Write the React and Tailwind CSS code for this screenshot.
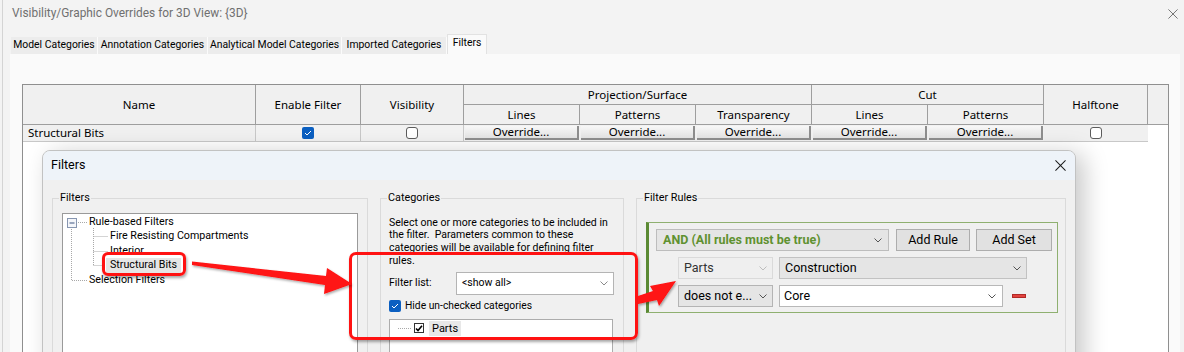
import React from "react";

function Chevron({ color = "#555" }) {
  return (
    <svg width="8" height="5" viewBox="0 0 8 5" className="shrink-0">
      <path d="M0.5 0.5 L4 4 L7.5 0.5" fill="none" stroke={color} strokeWidth="1" />
    </svg>
  );
}

function CloseX({ size = 12, color = "#333" }) {
  return (
    <svg width={size} height={size} viewBox="0 0 12 12" className="shrink-0">
      <path d="M0.5 0.5 L11.5 11.5 M11.5 0.5 L0.5 11.5" stroke={color} strokeWidth="1.1" />
    </svg>
  );
}

function BlueCheck() {
  return (
    <span className="flex items-center justify-center w-[12px] h-[12px] rounded-[2px] bg-[#0b5fc1]">
      <svg width="8" height="6" viewBox="0 0 8 6">
        <path d="M1 3 L3 5 L7 1" fill="none" stroke="#fff" strokeWidth="1" />
      </svg>
    </span>
  );
}

function EmptyCheck() {
  return <span className="block w-[12px] h-[12px] rounded-[3px] border border-[#5c5c5c] bg-white" />;
}

function Override() {
  return (
    <div className="p-[1px] border-b border-[#c8c8c8] bg-[#f2f2f2]">
      <div className="h-full flex items-center justify-center bg-gradient-to-b from-[#f7f7f7] to-[#e4e4e4] border-r-2 border-b-2 border-[#8e8e8e] text-[11.5px] leading-none">
        Override...
      </div>
    </div>
  );
}

function HCell({ className = "", children }) {
  return (
    <div className={`flex items-center justify-center bg-[#f0f0f0] border-r border-b border-[#9e9e9e] text-[11.5px] leading-none ${className}`}>
      {children}
    </div>
  );
}

export default function App() {
  const tabs = [
    ["Model Categories", "w-[87px]"],
    ["Annotation Categories", "w-[110px]"],
    ["Analytical Model Categories", "w-[134px]"],
    ["Imported Categories", "w-[105px]"],
  ];
  return (
    <div className="relative w-[1184px] h-[352px] overflow-hidden bg-[#f3f3f3] font-['Noto_Sans',sans-serif] text-black flex flex-col">
      {/* title bar */}
      <div className="h-[28px] shrink-0 flex items-center justify-between pl-[12px] pr-[6px] font-['Roboto',sans-serif]">
        <span className="text-[11.9px] text-[#707070]">Visibility/Graphic Overrides for 3D View: {"{3D}"}</span>
        <CloseX size={10} color="#6a6a6a" />
      </div>
      {/* tabs */}
      <div className="h-[26px] shrink-0 flex items-end pl-[11px] font-['Roboto',sans-serif]">
        {tabs.map(([t, w]) => (
          <div key={t} className={`${w} h-[17px] flex items-center justify-center bg-[#ececec] border-r border-[#fbfbfb] text-[10.4px] leading-none whitespace-nowrap`}>
            {t}
          </div>
        ))}
        <div className="w-[40px] h-[20px] flex items-center justify-center bg-[#fafafa] border-x border-t border-[#e2e2e2] text-[10.4px] leading-none pb-[2px]">
          Filters
        </div>
      </div>
      {/* tab page */}
      <div className="flex-1 min-h-0 ml-[10px] mr-[4px] bg-[#fafafa] pt-[30px] pl-[12px] pr-[11px] flex flex-col">
        <div className="flex-1 bg-white border-x border-t border-[#8f8f8f]">
          <div className="grid grid-cols-[233px_105px_103px_116px_116px_116px_116px_116px_104px_20px] grid-rows-[20px_20px_17px]">
            <HCell className="row-span-2">Name</HCell>
            <HCell className="row-span-2">Enable Filter</HCell>
            <HCell className="row-span-2">Visibility</HCell>
            <HCell className="col-span-3">Projection/Surface</HCell>
            <HCell className="col-span-2">Cut</HCell>
            <HCell className="row-span-2">Halftone</HCell>
            <HCell className="row-span-2 border-r-0" />
            <HCell>Lines</HCell>
            <HCell>Patterns</HCell>
            <HCell>Transparency</HCell>
            <HCell>Lines</HCell>
            <HCell>Patterns</HCell>
            {/* data row */}
            <div className="flex items-center pl-[5px] bg-[#f0f0f0] border-r border-b border-[#c8c8c8] text-[11.5px] leading-none">
              Structural Bits
            </div>
            <div className="flex items-center justify-center bg-[#f2f2f2] border-r border-b border-[#c8c8c8]">
              <BlueCheck />
            </div>
            <div className="flex items-center justify-center bg-[#f2f2f2] border-r border-b border-[#c8c8c8]">
              <EmptyCheck />
            </div>
            <Override />
            <Override />
            <Override />
            <Override />
            <Override />
            <div className="flex items-center justify-center bg-[#f0f0f0] border-b border-[#c8c8c8]">
              <EmptyCheck />
            </div>
            <div className="bg-white" />
          </div>
        </div>
      </div>

      {/* parent window edge */}
      <div className="absolute left-[2px] top-0 h-[352px] w-px bg-[#d4d4d4]" />

      {/* Filters dialog */}
      <div className="absolute left-[42px] top-[150px] w-[1034px] h-[230px] rounded-t-[8px] border border-[#c2c2c2] bg-[#f0f0f0] shadow-[8px_4px_24px_rgba(0,0,0,0.22)] overflow-hidden flex flex-col font-['Roboto',sans-serif]">
        <div className="h-[29px] shrink-0 bg-[#eef3f9] flex items-center justify-between pl-[8px] pr-[9px]">
          <span className="text-[12.5px]">Filters</span>
          <CloseX size={11} color="#1a1a1a" />
        </div>
        <div className="flex gap-[12px] pl-[9px] pt-[11px]">
          {/* Filters group */}
          <fieldset className="w-[316px] h-[200px] border border-[#dadada] p-0 m-0 min-w-0">
            <legend className="ml-[6px] px-[1px] text-[10.8px] leading-[14px]">Filters</legend>
            <div className="relative mt-[8px] ml-[9px] w-[296px] h-[160px] bg-white border border-[#9a9a9a] text-[10.7px] leading-none">
              <svg className="absolute left-0 top-0" width="120" height="80" viewBox="0 0 120 80">
                <g stroke="#a8a8a8" strokeWidth="1" strokeDasharray="1 1" fill="none">
                  <path d="M13 8.5 H24" />
                  <path d="M8.5 13 V66.5 H24" />
                  <path d="M30.5 14 V51.5" />
                  <path d="M30.5 22.5 H45 M30.5 37.5 H45 M30.5 51.5 H42" />
                </g>
                <rect x="4.5" y="4.5" width="9" height="9" fill="#f4f6fa" stroke="#8796b0" />
                <path d="M6.5 9 H11.5" stroke="#3d5580" strokeWidth="1" />
              </svg>
              <div className="flex flex-col pt-[1px]">
                <div className="h-[14.5px] flex items-center pl-[26px]">Rule-based Filters</div>
                <div className="h-[14.5px] flex items-center pl-[47px]">Fire Resisting Compartments</div>
                <div className="h-[14.5px] flex items-center pl-[47px]">Interior</div>
                <div className="h-[14.5px] flex items-center pl-[43px]">
                  <span className="h-[15px] flex items-center px-[4px] bg-[#e5e5e5]">Structural Bits</span>
                </div>
                <div className="h-[14.5px] flex items-center pl-[26px]">Selection Filters</div>
              </div>
            </div>
          </fieldset>

          {/* Categories group */}
          <fieldset className="w-[244px] h-[200px] border border-[#dadada] p-0 m-0 min-w-0">
            <legend className="ml-[6px] px-[1px] text-[10.8px] leading-[14px]">Categories</legend>
            <div className="ml-[8px] flex flex-col text-[10.5px]">
              <p className="mt-[11.5px] leading-[12.7px] whitespace-nowrap">
                Select one or more categories to be included in
                <br />
                the filter.&nbsp; Parameters common to these
                <br />
                categories will be available for defining filter
                <br />
                rules.
              </p>
              <div className="mt-[4.5px] flex items-center">
                <span className="w-[67px] leading-none">Filter list:</span>
                <div className="w-[158px] h-[23px] bg-white border border-[#b4b4b4] flex items-center justify-between pl-[5px] pr-[5px]">
                  <span className="leading-none">&lt;show all&gt;</span>
                  <Chevron color="#8a8a8a" />
                </div>
              </div>
              <div className="mt-[4px] h-[14px] flex items-center gap-[4px]">
                <BlueCheck />
                <span className="leading-none text-[10.3px]">Hide un-checked categories</span>
              </div>
              <div className="mt-[6px] w-[224px] h-[100px] bg-white border border-[#acacac] pt-[1px]">
                <div className="h-[15px] flex items-center">
                  <span className="ml-[8px] w-[13px] border-t border-dotted border-[#a8a8a8]" />
                  <span className="ml-[3px] w-[10px] h-[10px] border border-[#333] bg-white flex items-center justify-center">
                    <svg width="8" height="7" viewBox="0 0 8 7">
                      <path d="M1 3.5 L3 5.5 L7 0.8" fill="none" stroke="#000" strokeWidth="1.6" />
                    </svg>
                  </span>
                  <span className="ml-[5px] h-[15px] flex items-center px-[3px] bg-[#e8e8e8] leading-none text-[11px]">Parts</span>
                </div>
              </div>
            </div>
          </fieldset>

          {/* Filter Rules group */}
          <fieldset className="w-[430px] h-[200px] border border-[#dadada] p-0 m-0 min-w-0">
            <legend className="ml-[6px] px-[1px] text-[10.8px] leading-[14px]">Filter Rules</legend>
            <div className="mt-[17px] ml-[9px] w-[412px] border border-[#8fb070] border-l-[3px] border-l-[#5b8a34] pl-[7px] pt-[6px] pb-[5px] pr-[5px] text-[12.5px] leading-none">
              <div className="flex h-[22px]">
                <div className="w-[233px] bg-[#e5e5e5] border border-[#bdbdbd] flex items-center justify-between pl-[6px] pr-[6px]">
                  <span className="font-bold text-[#5f9130]">AND (All rules must be true)</span>
                  <Chevron color="#555" />
                </div>
                <div className="ml-[7px] w-[74px] bg-[#e1e1e1] border border-[#adadad] flex items-center justify-center">Add Rule</div>
                <div className="ml-[6px] w-[76px] bg-[#e1e1e1] border border-[#adadad] flex items-center justify-center">Add Set</div>
              </div>
              <div className="mt-[6px] flex h-[22px] pl-[22px]">
                <div className="w-[95px] bg-[#efefef] border border-[#dadada] flex items-center justify-between pl-[5px] pr-[5px] text-[#333]">
                  <span>Parts</span>
                  <Chevron color="#bdbdbd" />
                </div>
                <div className="ml-[6px] w-[248px] bg-[#e5e5e5] border border-[#c2c2c2] flex items-center justify-between pl-[5px] pr-[5px]">
                  <span>Construction</span>
                  <Chevron color="#555" />
                </div>
              </div>
              <div className="mt-[6px] flex items-center h-[22px] pl-[22px]">
                <div className="w-[95px] h-full bg-[#e5e5e5] border border-[#b4b4b4] flex items-center justify-between pl-[5px] pr-[5px]">
                  <span>does not e...</span>
                  <Chevron color="#555" />
                </div>
                <div className="ml-[6px] w-[224px] h-full bg-white border border-[#b8b8b8] flex items-center justify-between pl-[4px] pr-[6px]">
                  <span>Core</span>
                  <Chevron color="#555" />
                </div>
                <div className="ml-[9px] w-[14px] h-[4px] bg-[#e2433f] border border-[#b02a27]" />
              </div>
            </div>
          </fieldset>
        </div>
      </div>

      {/* annotations */}
      <div className="absolute left-[102px] top-[252px] w-[84px] h-[24px] border-[3px] border-[#ff1212] rounded-[6px] shadow-[1px_2px_3px_rgba(0,0,0,0.35)]" />
      <div className="absolute left-[349px] top-[252px] w-[289px] h-[88px] border-[3px] border-[#ff1212] rounded-[7px] shadow-[1px_2px_3px_rgba(0,0,0,0.35)]" />
      <svg className="absolute left-0 top-0 pointer-events-none" width="1184" height="352" viewBox="0 0 1184 352">
        <defs>
          <filter id="sh" x="-10%" y="-10%" width="120%" height="130%">
            <feDropShadow dx="1" dy="1.5" stdDeviation="1" floodColor="#000" floodOpacity="0.35" />
          </filter>
        </defs>
        <polygon filter="url(#sh)" fill="#ff1212" points="192,261.5 326,276 327,268 352,284 324,294 325,285 192,265" />
        <polygon filter="url(#sh)" fill="#ff1212" points="638,296 653,291 650,286 676,281 659,306 657,300 638,304" />
      </svg>
    </div>
  );
}
